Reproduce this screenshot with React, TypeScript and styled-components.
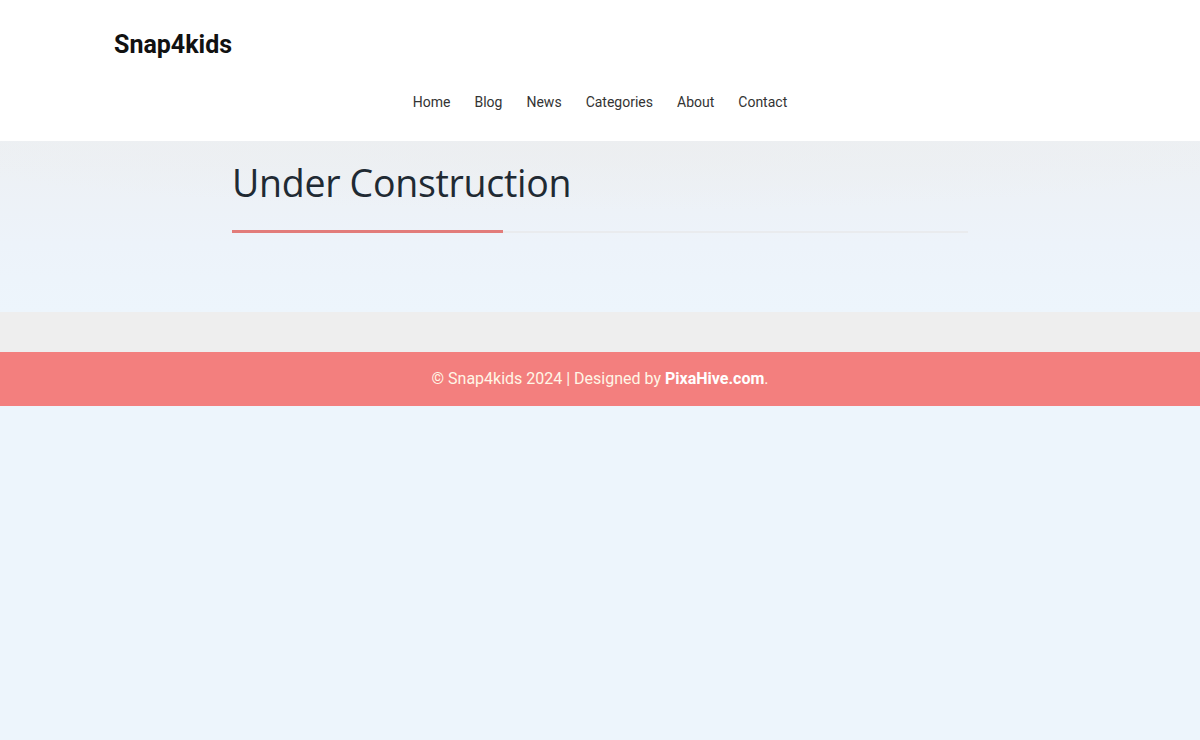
import React from 'react';
import styled, {createGlobalStyle} from 'styled-components';

const GlobalStyle = createGlobalStyle`
  html, body {
    margin: 0;
    padding: 0;
    background: #edf5fc;
    font-family: Roboto, "Liberation Sans", sans-serif;
  }
`;

const Header = styled.header`
  background: #ffffff;
  height: 141px;
  box-sizing: border-box;
  padding-top: 29px;
`;

const HeaderInner = styled.div`
  width: 972px;
  margin: 0 auto;
  display: flex;
  flex-direction: column;
`;

const Logo = styled.a`
  font-size: 25px;
  font-weight: 700;
  color: #111;
  text-decoration: none;
  line-height: 32px;
`;

const Nav = styled.nav`
  display: flex;
  justify-content: center;
  gap: 24px;
  margin-top: 31px;
`;

const NavLink = styled.a`
  font-size: 14px;
  color: #333;
  text-decoration: none;
  line-height: 20px;
`;

const Hero = styled.section`
  height: 171px;
  background:
    radial-gradient(ellipse 60% 70px at 50% 0%, rgba(236, 238, 240, 0.9), rgba(236, 238, 240, 0) 100%),
    linear-gradient(180deg, #edf0f3 0%, #edf3fa 60%, #edf5fc 100%);
  padding-top: 18px;
  box-sizing: border-box;
`;

const HeroInner = styled.div`
  width: 736px;
  margin: 0 auto;
`;

const Title = styled.h1`
  margin: 0;
  font-family: "Open Sans", "Noto Sans", sans-serif;
  font-weight: 400;
  font-size: 37.5px;
  line-height: 48px;
  color: #1f2a33;
  letter-spacing: -0.3px;
`;

const Rule = styled.div`
  margin-top: 23px;
  height: 3px;
  display: flex;
  align-items: center;
`;

const RuleAccent = styled.div`
  width: 271px;
  height: 3px;
  background: #e27c7a;
`;

const RuleRest = styled.div`
  flex: 1;
  height: 2px;
  background: #e9ebee;
`;

const Band = styled.div`
  height: 40px;
  background: #eeeeee;
`;

const Footer = styled.footer`
  height: 54px;
  background: #f37f7e;
  display: flex;
  align-items: center;
  justify-content: center;
  color: #fff6e6;
  font-size: 16px;
  padding-bottom: 2px;
  box-sizing: border-box;
`;

const Strong = styled.b`
  font-weight: 700;
  color: #ffffff;
`;

const links = ['Home', 'Blog', 'News', 'Categories', 'About', 'Contact'];

const App: React.FC = () => (
  <>
    <GlobalStyle />
    <Header>
      <HeaderInner>
        <Logo href="#">Snap4kids</Logo>
        <Nav>
          {links.map((l) => (
            <NavLink key={l} href="#">{l}</NavLink>
          ))}
        </Nav>
      </HeaderInner>
    </Header>
    <Hero>
      <HeroInner>
        <Title>Under Construction</Title>
        <Rule>
          <RuleAccent />
          <RuleRest />
        </Rule>
      </HeroInner>
    </Hero>
    <Band />
    <Footer>
      © Snap4kids 2024 | Designed by&nbsp;<Strong>PixaHive.com</Strong>.
    </Footer>
  </>
);

export default App;
